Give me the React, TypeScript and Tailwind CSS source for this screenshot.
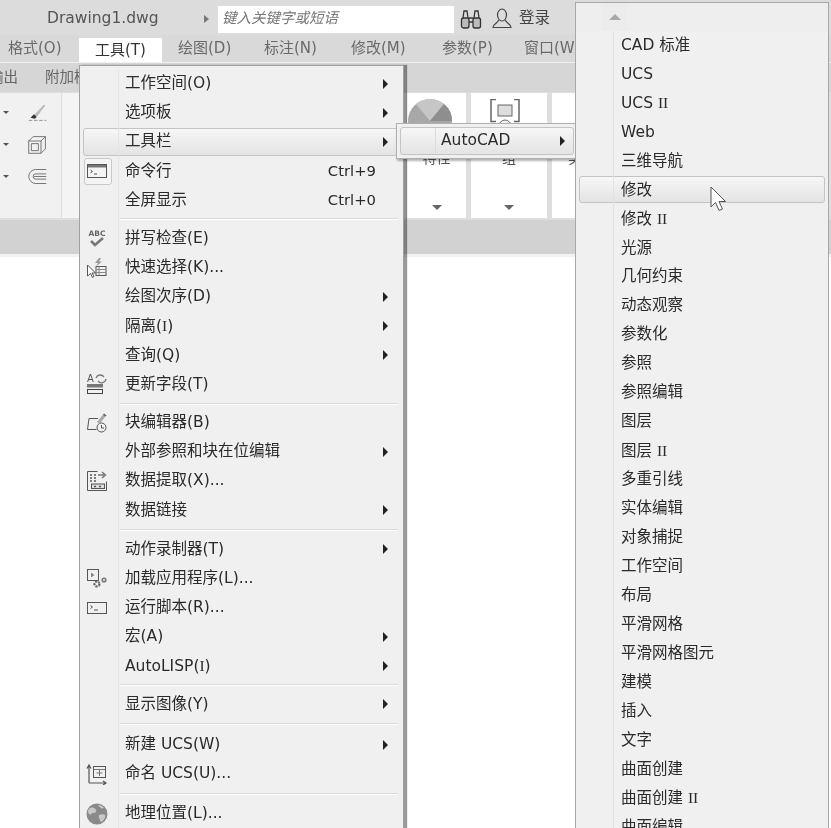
import React from 'react';

const FONT = 'font-["DejaVu_Sans","Noto_Sans_CJK_SC",sans-serif]';

type Entry = { label: React.ReactNode; sub?: boolean; keys?: string; icon?: React.ReactNode; hover?: boolean; boxed?: boolean };

const Arrow = () => <span className="block w-0 h-0 border-y-[5px] border-y-transparent border-l-[5px] border-l-[#222]" />;
const SerifI = ({ t }: { t: string }) => <span className='font-["Liberation_Serif",serif]'>{t}</span>;

const Svg = ({ children }: { children: React.ReactNode }) => (
  <svg width="22" height="22" viewBox="0 0 22 22" fill="none" stroke="#555" strokeWidth="1">{children}</svg>
);

const CmdIcon = () => (
  <Svg>
    <rect x="1.5" y="4.5" width="19" height="13" fill="#f4f4f4" />
    <rect x="2" y="5" width="18" height="2.5" fill="#777" stroke="none" />
    <path d="M4.5 10l2 1.5-2 1.5M8 14h3" />
  </Svg>
);
const ScriptIcon = () => (
  <Svg>
    <rect x="1.5" y="5.5" width="19" height="11" />
    <path d="M4.5 8.5l2 1.5-2 1.5M8 13h4" />
  </Svg>
);
const AbcIcon = () => (
  <Svg>
    <text x="11" y="8" textAnchor="middle" fontSize="7.5" fontWeight="700" fill="#666" stroke="none" fontFamily="DejaVu Sans">ABC</text>
    <path d="M5 13l4 4 8-7" stroke="#777" strokeWidth="2.6" />
  </Svg>
);
const QuickIcon = () => (
  <Svg>
    <path d="M1.5 8v11l3-2.500 2 4 1.500-1-2-3.500h3.500z" fill="#fff" />
    <rect x="10" y="9.5" width="10" height="9" />
    <path d="M10 12.500h10M10 15.500h10M13 9.500v9" stroke="#888" />
    <path d="M13 1l-4 5h3l-2 3.500 6-5h-3l2-3.500z" fill="#999" stroke="none" />
  </Svg>
);
const FieldIcon = () => (
  <Svg>
    <text x="1" y="9" fontSize="10" fill="#555" stroke="none" fontFamily="DejaVu Sans">A</text>
    <path d="M10 5a4.500 4.500 0 018-1M20 6a4.500 4.500 0 01-8 2" stroke="#777" strokeWidth="1.300" />
    <rect x="1" y="11" width="16" height="3.500" fill="#777" stroke="none" />
    <rect x="1.500" y="16.500" width="15" height="4" stroke="#444" />
  </Svg>
);
const BlockIcon = () => (
  <Svg>
    <path d="M1.500 17.500l1.500-11h9M1.500 17.500h9" stroke="#555" />
    <circle cx="15.500" cy="15.500" r="4.500" stroke="#555" />
    <path d="M15.500 13v3h2.500" stroke="#555" />
    <path d="M11 10l6-7.500 2.500 2-6 7.500z" fill="#aaa" stroke="none" />
    <path d="M18 1.500l2.500 2-1 1-2.500-2z" fill="#555" stroke="none" />
  </Svg>
);
const DataIcon = () => (
  <Svg>
    <path d="M1.500 20.500v-19h10M1.500 20.500h19v-9" />
    <path d="M4 5h2M8 5h2M4 8h2M8 8h2M4 11h2M8 11h2" stroke="#555" strokeWidth="1.500" />
    <path d="M12 5h6M16 2l3.500 3-3.500 3" stroke="#777" strokeWidth="1.500" />
    <rect x="5.500" y="14" width="13" height="4.500" fill="#ddd" />
    <path d="M8 16.500h2M13 16.500h2" stroke="#555" strokeWidth="1.500" />
  </Svg>
);
const AppIcon = () => (
  <Svg>
    <rect x="1.500" y="1.500" width="11" height="11" />
    <path d="M5 4.500l3.500 2.500-3.500 2.500z" fill="#888" stroke="none" />
    <circle cx="11" cy="16" r="2.500" strokeWidth="2.200" stroke="#666" strokeDasharray="2.200 1" />
    <circle cx="18" cy="12" r="1.800" strokeWidth="1.600" stroke="#777" />
  </Svg>
);
const UcsIcon = () => (
  <Svg>
    <path d="M3 20V3M1 5.500L3 2l2 3.500M3 20h17M17 18l3 2-3 2" stroke="#555" strokeWidth="1.200" />
    <rect x="7.500" y="3.500" width="12" height="11" />
    <path d="M7.500 6.500h12M10.500 10h6M13.500 7v6" stroke="#777" />
  </Svg>
);
const GlobeIcon = () => (
  <Svg>
    <circle cx="11" cy="11" r="10.500" fill="#8a8a8a" stroke="none" />
    <path d="M4 5c3-1 5 0 6 2s-1 3-3 3-2 3-4 1-1-4 1-6zM13 12c2-1 5-1 6 0s-1 6-4 7c-1-2-3-5-2-7zM12 2c2 0 5 1 6 3-2 1-4 0-6-3z" fill="#c9c9c9" stroke="none" />
  </Svg>
);

const toolsMenu: (Entry | string)[] = [
  { label: '工作空间(O)', sub: true },
  { label: '选项板', sub: true },
  { label: '工具栏', sub: true, hover: true },
  { label: '命令行', keys: 'Ctrl+9', icon: <CmdIcon />, boxed: true },
  { label: '全屏显示', keys: 'Ctrl+0' },
  'h-[9px]',
  { label: '拼写检查(E)', icon: <AbcIcon /> },
  { label: '快速选择(K)...', icon: <QuickIcon /> },
  { label: '绘图次序(D)', sub: true },
  { label: <>隔离(<SerifI t="I" />)</>, sub: true },
  { label: '查询(Q)', sub: true },
  { label: '更新字段(T)', icon: <FieldIcon /> },
  'h-[9px]',
  { label: '块编辑器(B)', icon: <BlockIcon /> },
  { label: '外部参照和块在位编辑', sub: true },
  { label: '数据提取(X)...', icon: <DataIcon /> },
  { label: '数据链接', sub: true },
  'h-[10px]',
  { label: '动作录制器(T)', sub: true },
  { label: '加载应用程序(L)...', icon: <AppIcon /> },
  { label: '运行脚本(R)...', icon: <ScriptIcon /> },
  { label: '宏(A)', sub: true },
  { label: <>AutoLISP(<SerifI t="I" />)</>, sub: true },
  'h-[9px]',
  { label: '显示图像(Y)', sub: true },
  'h-[11px]',
  { label: '新建 UCS(W)', sub: true },
  { label: '命名 UCS(U)...', icon: <UcsIcon /> },
  'h-[11px]',
  { label: '地理位置(L)...', icon: <GlobeIcon /> },
];

const toolbars: React.ReactNode[] = [
  'CAD 标准', 'UCS', <>UCS <SerifI t="II" /></>, 'Web', '三维导航', '修改', <>修改 <SerifI t="II" /></>, '光源', '几何约束', '动态观察',
  '参数化', '参照', '参照编辑', '图层', <>图层 <SerifI t="II" /></>, '多重引线', '实体编辑', '对象捕捉', '工作空间', '布局',
  '平滑网格', '平滑网格图元', '建模', '插入', '文字', '曲面创建', <>曲面创建 <SerifI t="II" /></>, '曲面编辑',
];

const hoverRow = 'rounded-[3px] border border-[#c4c4c4] bg-gradient-to-b from-[#f6f6f6] to-[#e4e4e4]';

const MenuRow = ({ e }: { e: Entry }) => (
  <div className="relative flex h-[29.2px] items-center">
    {e.hover && <div className={`absolute left-[3px] right-[5px] top-px bottom-px ${hoverRow}`} />}
    {e.boxed && <div className="absolute left-[4px] top-px h-[27px] w-[28px] rounded-[3px] border border-[#c8c8c8] bg-[#f4f4f4]" />}
    <div className="relative flex h-full w-[39px] shrink-0 items-center border-r border-[#e4e4e4] pl-[6px]">{e.icon}</div>
    <span className="relative ml-[6px] flex-1 whitespace-nowrap">{e.label}</span>
    {e.keys && <span className="relative mr-[27px] text-[14.800px]">{e.keys}</span>}
    {e.sub && <span className="relative mr-[15px]"><Arrow /></span>}
  </div>
);

const MenuSep = ({ h }: { h: string }) => (
  <div className={`flex items-center ${h}`}>
    <div className="h-full w-[39px] shrink-0 border-r border-[#e4e4e4]" />
    <div className="ml-px mr-[5px] h-[2px] flex-1 border-t border-[#dadada] bg-white" />
  </div>
);

const Tile = ({ w, label, children }: { w: string; label: string; children?: React.ReactNode }) => (
  <div className={`relative flex h-[125px] shrink-0 flex-col items-center bg-white ${w}`}>
    <div className="h-[50px] w-full overflow-hidden pt-[6px]">{children}</div>
    <span className="text-[14px] leading-[30px] text-[#555]">{label}</span>
    <span className="absolute bottom-[8px] h-0 w-0 border-x-[5px] border-t-[5px] border-x-transparent border-t-[#666]" />
  </div>
);

const Dot = () => <span className="h-0 w-0 border-x-[3px] border-t-[3px] border-x-transparent border-t-[#555]" />;

const menuItems = [
  { t: '格式(O)', c: 'w-[79px] pl-2' },
  { t: '工具(T)', c: 'w-[83px] pl-4 self-end h-[24px] bg-white text-[#333]' },
  { t: '绘图(D)', c: 'w-[86px] pl-4' },
  { t: '标注(N)', c: 'w-[87px] pl-4' },
  { t: '修改(M)', c: 'w-[90px] pl-4' },
  { t: '参数(P)', c: 'w-[82px] pl-[17px]' },
  { t: '窗口(W)', c: 'w-[90px] pl-[17px]' },
];

export default function App() {
  return (
    <div className={`relative h-[828px] w-[831px] overflow-hidden bg-white blur-[0.4px] ${FONT} text-[15.5px] text-[#2a2a2a]`}>
      {/* title bar */}
      <div className="flex h-[35px] items-center bg-[#dcdcdc] pt-[3px]">
        <span className="ml-[47px] w-[157px] text-[#555]">Drawing1.dwg</span>
        <span className="h-0 w-0 border-y-[4px] border-l-[5px] border-y-transparent border-l-[#777]" />
        <div className="ml-[9px] flex h-[27px] w-[236px] items-center bg-white pl-1 text-[14.500px] italic text-[#777]">键入关键字或短语</div>
        <svg className="ml-[6px]" width="22" height="20" viewBox="0 0 22 20" fill="none" stroke="#333" strokeWidth="1.300">
          <rect x="1.500" y="9" width="7.500" height="10" rx="2" fill="#bbb" />
          <rect x="13" y="9" width="7.500" height="10" rx="2" fill="#bbb" />
          <path d="M3 9l1-7h3l1 7M14 9l1-7h3l1 7M9 9h4M9 13h4" />
        </svg>
        <svg className="ml-[10px]" width="20" height="22" viewBox="0 0 20 22" fill="none" stroke="#444" strokeWidth="1.200">
          <ellipse cx="10" cy="7" rx="4.500" ry="6" />
          <path d="M6.500 12c0 3-5 3-5.500 7.500h18c-.5-4.500-5.500-4.500-5.500-7.500" />
        </svg>
        <span className="ml-[7px] text-[#444]">登录</span>
      </div>

      {/* menu bar */}
      <div className="flex h-[28px] items-center border-b border-[#f0f0f0] bg-[#d9d9d9] text-[15px] text-[#6a6a6a]">
        {menuItems.map(m => (
          <span key={m.t} className={`flex shrink-0 items-center whitespace-nowrap ${m.c}`}>{m.t}</span>
        ))}
      </div>

      {/* ribbon tabs */}
      <div className="flex h-[29px] items-center gap-[27px] bg-[#d6d6d6] text-[14.500px] text-[#666]">
        <span className="-ml-[11px]">输出</span>
        <span>附加模块</span>
      </div>

      {/* ribbon */}
      <div className="flex h-[128px] bg-[#dedede] pt-px">
        <div className="flex h-[125px] w-[61px] flex-col gap-[11px] bg-[#f1f1f1] pl-[3px] pt-[9px]">
          <div className="flex items-center gap-[18px]">
            <Dot />
            <svg width="21" height="21" viewBox="0 0 24 24" fill="none" stroke="#888">
              <path d="M8 15L19 3l2 1-10 13z" fill="#bbb" stroke="none" />
              <path d="M4 18l4-4 3 3-2 2z" fill="#333" stroke="none" />
              <path d="M2 21h20" strokeDasharray="4 2" />
            </svg>
          </div>
          <div className="flex items-center gap-[18px]">
            <Dot />
            <svg width="21" height="21" viewBox="0 0 24 24" fill="none" stroke="#666">
              <rect x="2" y="8" width="14" height="14" />
              <path d="M5 11h8v8H5zM2 8l5-5h14v14l-5 5M16 8l5-5" />
            </svg>
          </div>
          <div className="flex items-center gap-[18px]">
            <Dot />
            <svg width="21" height="21" viewBox="0 0 24 24" fill="none" stroke="#666">
              <path d="M22 4H10a8 8 0 000 16h12M22 9H10a3 3 0 000 6h12M8 12h14" />
            </svg>
          </div>
        </div>
        <div className="ml-px h-[125px] w-[344px] bg-[#f4f4f4]" />
        <div className="ml-[1px] flex gap-[5px]">
          <Tile w="w-[59px]" label="特性">
            <svg className="ml-[1px]" width="44" height="44" viewBox="0 0 44 44">
              <circle cx="22" cy="22" r="22" fill="#a8a8a8" />
              <path d="M22 22L8 5a22 22 0 0128 0z" fill="#c6c6c6" />
              <path d="M22 22L44 22a22 22 0 00-8-17z" fill="#8e8e8e" />
            </svg>
          </Tile>
          <Tile w="w-[76px]" label="组">
            <svg className="ml-[19px]" width="30" height="44" viewBox="0 0 30 44" fill="none" stroke="#666">
              <path d="M6 .5H1v22h5M24 .5h5v22h-5" strokeWidth="1.500" />
              <rect x="8" y="6" width="14" height="11" fill="#ddd" />
              <circle cx="15" cy="27" r="6" fill="#eee" />
            </svg>
          </Tile>
          <Tile w="w-[60px]" label="实用" />
        </div>
      </div>
      <div className="h-[37px] border-b-[3px] border-[#f2f2f2] bg-[#d2d2d2]" />

      {/* 工具 menu */}
      <div className="absolute left-[79px] top-[65px] h-[780px] w-[325px] border border-[#a0a0a0] bg-[#f0f0f0] pt-[3px] shadow-[3px_0_1px_rgba(0,0,0,0.4)]">
        {toolsMenu.map((e, i) => (typeof e === 'string' ? <MenuSep key={i} h={e} /> : <MenuRow key={i} e={e} />))}
      </div>

      {/* 工具栏 submenu */}
      <div className="absolute left-[396px] top-[123px] flex h-[36px] w-[182px] border border-[#b0b0b0] bg-[#f0f0f0] p-[3px] shadow-[1px_2px_2px_rgba(0,0,0,0.3)]">
        <div className={`relative flex flex-1 items-center pl-[40px] ${hoverRow}`}>
          <div className="absolute inset-y-0 left-[34px] w-px bg-[#dcdcdc]" />
          <span className="flex-1">AutoCAD</span>
          <span className="mr-[8px]"><Arrow /></span>
        </div>
      </div>

      {/* AutoCAD submenu */}
      <div className="absolute left-[575px] top-[2px] h-[840px] w-[254px] border border-[#a8a8a8] bg-[#f0f0f0]">
        <div className="flex h-[28px] items-center bg-[#eeeeee] pl-[26px]">
          <div className="flex h-full w-[25px] items-center justify-center bg-[#ececec]">
            <span className="h-0 w-0 border-x-[6px] border-b-[6px] border-x-transparent border-b-[#a8a8a8]" />
          </div>
        </div>
        {toolbars.map((t, i) => (
          <div key={i} className="relative flex h-[28.960px] items-center">
            {i === 5 && <div className={`absolute left-[3px] right-[3px] top-0 h-[27px] ${hoverRow}`} />}
            <div className="relative h-full w-[38px] shrink-0 border-r border-[#e2e2e2]" />
            <span className="relative ml-[7px] whitespace-nowrap">{t}</span>
          </div>
        ))}
      </div>

      {/* mouse pointer */}
      <svg className="absolute left-[710px] top-[186px]" width="18" height="27" viewBox="0 0 18 27">
        <path d="M1 1v20l4.500-4.500 3.500 8 3.500-1.500-3.500-7.500h6.500z" fill="#fff" stroke="#555" strokeWidth="1" />
      </svg>
    </div>
  );
}
